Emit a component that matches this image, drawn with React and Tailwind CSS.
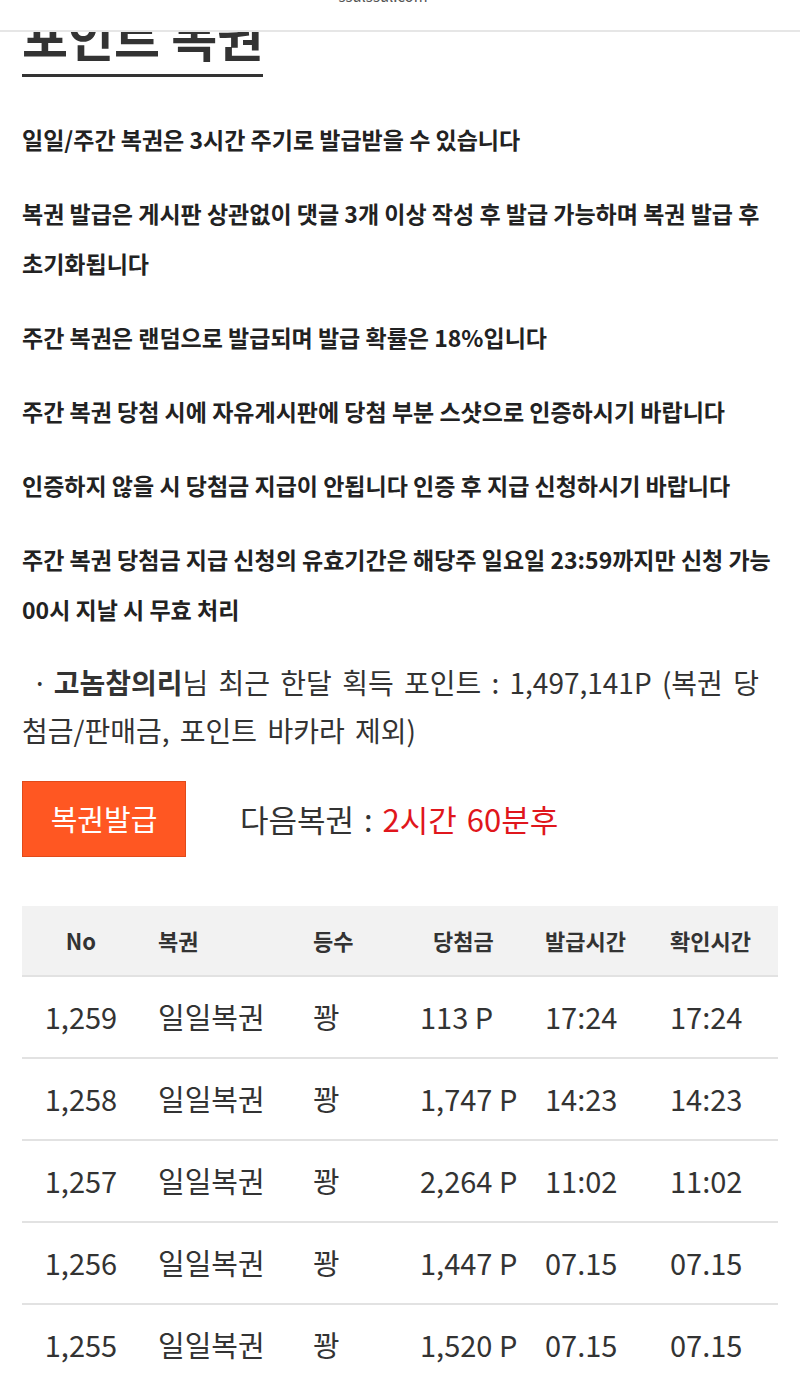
import React from "react";

const notes = [
  "일일/주간 복권은 3시간 주기로 발급받을 수 있습니다",
  "복권 발급은 게시판 상관없이 댓글 3개 이상 작성 후 발급 가능하며 복권 발급 후 초기화됩니다",
  "주간 복권은 랜덤으로 발급되며 발급 확률은 18%입니다",
  "주간 복권 당첨 시에 자유게시판에 당첨 부분 스샷으로 인증하시기 바랍니다",
  "인증하지 않을 시 당첨금 지급이 안됩니다 인증 후 지급 신청하시기 바랍니다",
  "주간 복권 당첨금 지급 신청의 유효기간은 해당주 일요일 23:59까지만 신청 가능 00시 지날 시 무효 처리",
];

const rows = [
  { no: "1,259", name: "일일복권", rank: "꽝", prize: "113 P", issued: "17:24", checked: "17:24" },
  { no: "1,258", name: "일일복권", rank: "꽝", prize: "1,747 P", issued: "14:23", checked: "14:23" },
  { no: "1,257", name: "일일복권", rank: "꽝", prize: "2,264 P", issued: "11:02", checked: "11:02" },
  { no: "1,256", name: "일일복권", rank: "꽝", prize: "1,447 P", issued: "07.15", checked: "07.15" },
  { no: "1,255", name: "일일복권", rank: "꽝", prize: "1,520 P", issued: "07.15", checked: "07.15" },
];

const cols = "grid grid-cols-[118px_155px_105px_125px_125px_1fr]";

const App = () => {
  return (
    <div
      className="min-h-screen bg-white text-[#333] overflow-hidden"
      style={{ fontFamily: '"Noto Sans CJK KR", "Noto Sans", sans-serif' }}
    >
      {/* 브라우저 주소창 */}
      <div className="fixed top-0 left-0 right-0 h-[32px] bg-white border-b-2 border-[#e6e6e6] z-10 overflow-hidden">
        <div className="text-center text-[15px] text-[#555] leading-none -mt-[12px] pr-[34px]">
          ssulssul.com
        </div>
      </div>

      <div className="px-[22px]">
        <div className="pt-[10px]">
          <h1 className="inline-block text-[50px] font-bold leading-none text-[#333] pb-[14px] border-b-[3px] border-[#333]">
            포인트 복권
          </h1>
        </div>

        <div className="mt-[37px] text-[23px] font-bold text-[#222] leading-[50px]">
          {notes.map((n) => (
            <p key={n} className="mb-[24px]">
              {n}
            </p>
          ))}
        </div>

        <div className="pr-[8px] text-[28px] leading-[48px] text-[#333] [word-spacing:4px]">
          <span className="pl-[10px] pr-[6px]">·</span>
          <span className="font-bold">고놈참의리</span>님 최근 한달 획득 포인트 : 1,497,141P (복권 당첨금/판매금, 포인트 바카라 제외)
        </div>

        <div className="mt-[27px] flex items-center">
          <button className="w-[164px] h-[76px] bg-[#ff5722] border border-[#e04a1a] text-white text-[29px]">
            복권발급
          </button>
          <div className="ml-[54px] text-[31px] text-[#333] [word-spacing:3px]">
            다음복권 : <span className="text-[#e0161c]">2시간 60분후</span>
          </div>
        </div>

        <div className="mt-[49px]">
          <div className={`${cols} h-[71px] items-center bg-[#f2f2f2] border-b-2 border-[#e2e2e2] text-[22px] font-bold text-[#333]`}>
            <div className="text-center">No</div>
            <div className="pl-[18px]">복권</div>
            <div className="pl-[18px]">등수</div>
            <div className="pl-[33px]">당첨금</div>
            <div className="pl-[20px]">발급시간</div>
            <div className="pl-[20px]">확인시간</div>
          </div>
          {rows.map((r) => (
            <div
              key={r.no}
              className={`${cols} h-[82px] items-center border-b-2 border-[#e2e2e2] text-[29px] text-[#333]`}
            >
              <div className="text-center">{r.no}</div>
              <div className="pl-[18px]">{r.name}</div>
              <div className="pl-[18px]">{r.rank}</div>
              <div className="pl-[20px]">{r.prize}</div>
              <div className="pl-[20px]">{r.issued}</div>
              <div className="pl-[20px]">{r.checked}</div>
            </div>
          ))}
        </div>
      </div>
    </div>
  );
};

export default App;
